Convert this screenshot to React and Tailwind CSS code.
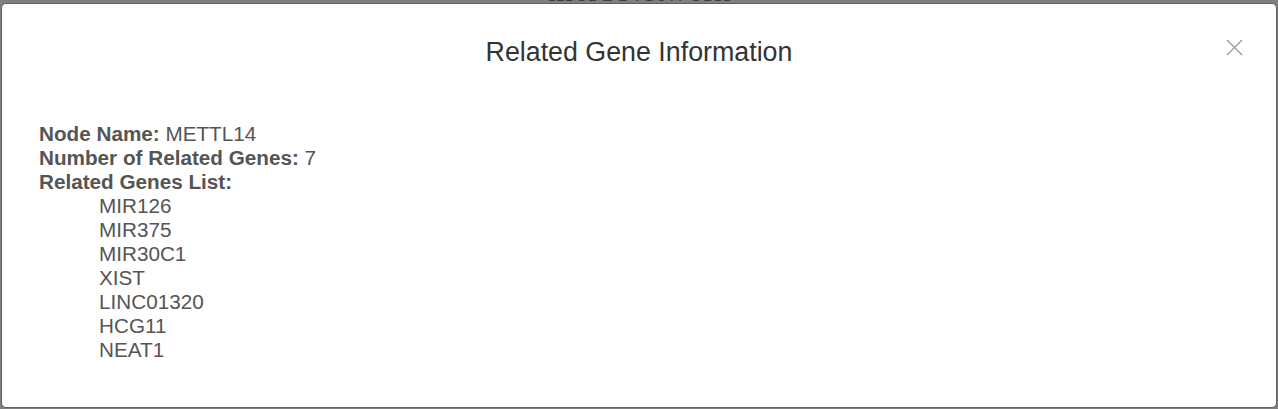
import React from 'react';

const genes = ['MIR126', 'MIR375', 'MIR30C1', 'XIST', 'LINC01320', 'HCG11', 'NEAT1'];

export default function App() {
  return (
    <div className="relative w-[1278px] h-[409px] overflow-hidden bg-[#7f7f7f] pt-[3px] pl-[1px]" style={{ fontFamily: '"Liberation Sans", Arial, sans-serif' }}>
      {/* page behind the overlay */}
      <div className="absolute left-0 right-0 top-[-26px] text-center text-[32px] leading-[32px] text-[#3b3b3b]" style={{ fontFamily: '"Liberation Serif", serif' }}>
        m6A Network
      </div>

      <div className="relative z-10 w-[1276px] h-[405px] bg-white border border-[#5f5f5f] rounded-[5px]">
        <div className="relative pt-[32px] h-[118px]">
          <h4 className="text-center text-[26.8px] leading-[32px] text-[#333333]">Related Gene Information</h4>
          <button className="absolute right-[33px] top-[35px] w-[17px] h-[17px] flex items-center justify-center">
            <svg width="17" height="17" viewBox="0 0 17 17" fill="none" stroke="#9a9a9a" strokeWidth="1.4">
              <path d="M1 1 L16 16 M16 1 L1 16" />
            </svg>
          </button>
        </div>
        <div className="pl-[37px] text-[20.7px] leading-[24px] text-[#555555]">
          <div><span className="font-bold">Node Name:</span> METTL14</div>
          <div><span className="font-bold">Number of Related Genes:</span> 7</div>
          <div className="font-bold">Related Genes List:</div>
          <ul className="pl-[60px]">
            {genes.map((g) => (
              <li key={g}>{g}</li>
            ))}
          </ul>
        </div>
      </div>
    </div>
  );
}
